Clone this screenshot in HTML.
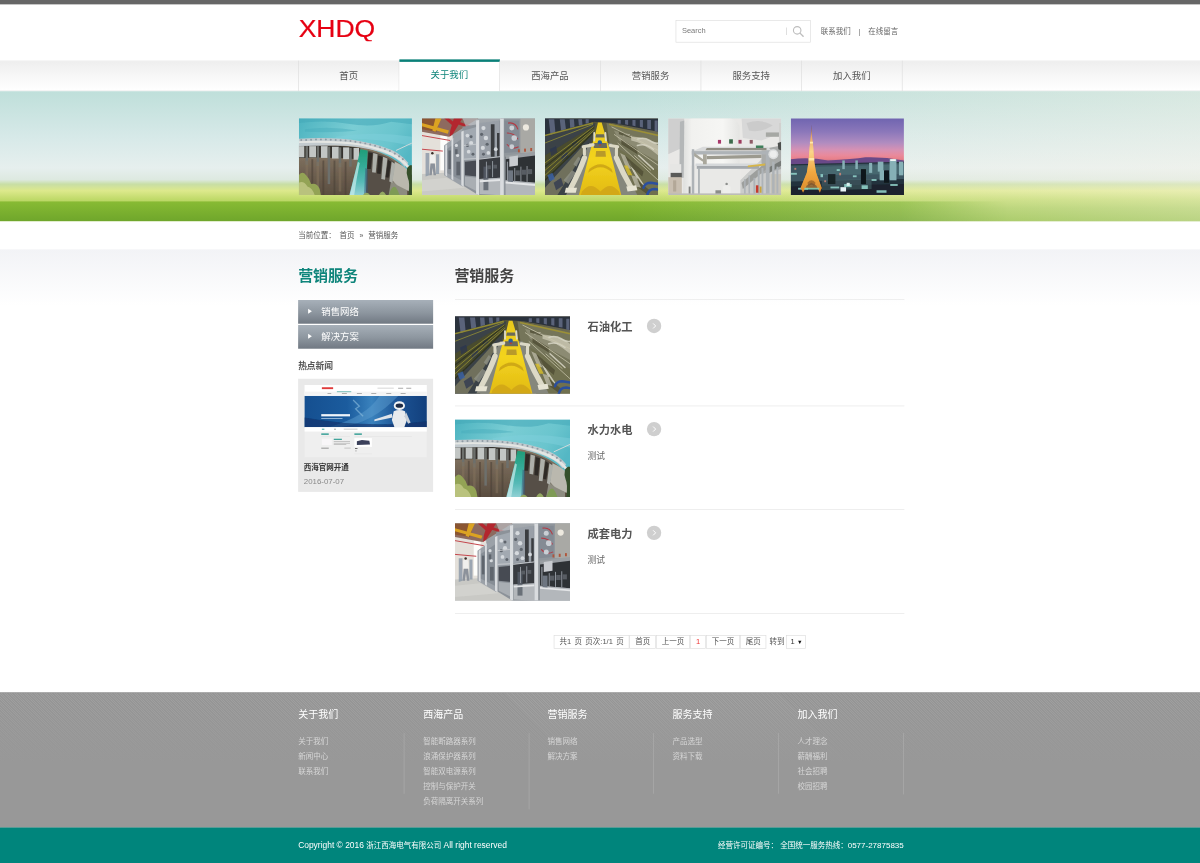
<!DOCTYPE html>
<html lang="zh-CN">
<head>
<meta charset="utf-8">
<title>营销服务 - 浙江西海电气有限公司</title>
<style>
*{margin:0;padding:0;box-sizing:border-box;}
html,body{width:1200px;height:863px;overflow:hidden;background:#fff;}
body{font-family:"Liberation Sans","Noto Sans CJK SC",sans-serif;font-size:12px;color:#666;}
ul{list-style:none;}
a{color:inherit;text-decoration:none;}
#page{position:absolute;left:0;top:0;width:1920px;height:1381px;transform:scale(.625);transform-origin:0 0;background:#fff;overflow:hidden;}
.wrap{position:absolute;left:477px;width:970px;}
/* top */
#topbar{position:absolute;left:0;top:0;width:1920px;height:7px;background:#666;}
#logo{position:absolute;left:0;top:26px;width:130px;height:40px;}
#search{position:absolute;left:604px;top:32px;width:216px;height:36px;border:1px solid #dcdcdc;background:#fff;}
#search .ph{position:absolute;left:9px;top:-1px;line-height:34px;font-size:12px;color:#7a7a7a;}
#search .sep{position:absolute;left:176px;top:11px;width:1px;height:12px;background:#ccc;}
#search svg{position:absolute;left:185px;top:7px;width:20px;height:20px;}
#toplinks{position:absolute;left:836px;top:40px;line-height:20px;font-size:12px;color:#666;white-space:nowrap;}
#toplinks i{font-style:normal;display:inline-block;width:28px;text-align:center;color:#777;}
/* nav */
#navbg{position:absolute;left:0;top:97px;width:1920px;height:49px;background:linear-gradient(#eeeeee,#f7f7f7 50%,#ffffff);border-top:1px solid #e6e6e6;border-bottom:1px solid #e2e2e2;}
#nav{top:97px;height:49px;display:flex;border-left:1px solid #dcdcdc;}
#nav li{width:161px;height:49px;line-height:48px;text-align:center;font-size:15px;color:#555;border-right:1px solid #dcdcdc;}
#nav li.on{background:#fff;border-top:4px solid #0a8078;line-height:42px;color:#0f857b;height:51px;margin-top:-2px;position:relative;}
/* banner */
#banner{position:absolute;left:0;top:146px;width:1920px;height:208px;background:linear-gradient(#bfdfda 0%,#d6e9e8 34.5%,#e6efee 59%,#dde9e0 68%,#c8dea5 71.5%,#dde98c 76.5%,#c0da6a 83%,#a6cb56 90%,#8fbd3f 100%);}
#band{position:absolute;left:0;top:321.5px;width:1620px;height:32.5px;background:linear-gradient(#88bb34,#6fa62b);-webkit-mask-image:linear-gradient(to right,#000 0,#000 1440px,rgba(0,0,0,0) 1610px);mask-image:linear-gradient(to right,#000 0,#000 1440px,rgba(0,0,0,0) 1610px);}
#bover{position:absolute;left:0;top:146px;width:1920px;height:208px;background:linear-gradient(to right,rgba(250,245,234,0) 0,rgba(250,245,234,0) 1000px,rgba(250,245,234,.2) 1450px,rgba(250,245,234,.4) 1920px);}
#bimgs{top:188.6px;height:123.4px;}
#bimgs svg{position:absolute;top:0;width:181.3px;height:123.4px;display:block;}
/* crumb */
#crumb{top:354px;height:45px;line-height:44px;font-size:12px;color:#555;white-space:nowrap;}
#crumb span{margin:0 6px 0 6px;}
#crumb b{font-weight:normal;margin:0 8px 0 2px;font-size:11px;}
#cbg{position:absolute;left:0;top:399px;width:1920px;height:90px;background:linear-gradient(#f2f3f6,#ffffff);}
/* side */
#side{position:absolute;left:477px;top:399px;width:216px;}
.h2{position:absolute;font-size:24px;font-weight:bold;line-height:40px;white-space:nowrap;letter-spacing:0;}
#side .h2{left:0;top:22px;color:#0f857b;}
#menu{position:absolute;left:0;top:81px;width:216px;}
#menu li{position:relative;height:38px;margin-bottom:2px;line-height:38px;padding-left:37px;font-size:15px;color:#fff;background:linear-gradient(#a7b0b9,#8d969f 55%,#727a84);border-bottom:1px solid #666e78;}
#menu li:before{content:"";position:absolute;left:16px;top:14px;border-left:6px solid #fff;border-top:4px solid transparent;border-bottom:4px solid transparent;}
#hot{position:absolute;left:0;top:174px;font-size:14px;font-weight:bold;color:#555;line-height:24px;white-space:nowrap;}
#news{position:absolute;left:0;top:207px;width:216px;height:181px;background:#e9e9e9;}
#news svg{position:absolute;left:10px;top:10px;width:196px;height:116px;display:block;}
#news .t{position:absolute;left:9px;top:131px;font-size:12px;font-weight:bold;color:#333;line-height:22px;white-space:nowrap;}
#news .d{position:absolute;left:9px;top:153px;font-size:12.6px;color:#888;line-height:22px;}
/* main */
#main{position:absolute;left:728px;top:399px;width:719px;}
#main .h2{left:-1px;top:22px;color:#444;}
#mline{position:absolute;left:0;top:80px;width:719px;height:1px;background:#e6e6e6;}
#list{position:absolute;left:0;top:86px;width:719px;}
#list li{position:relative;height:166px;border-bottom:1px solid #e4e4e4;}
#list li svg.ph{position:absolute;left:0;top:21px;width:184px;height:124px;display:block;}
#list h3{position:absolute;left:212px;top:21px;font-size:18px;font-weight:bold;color:#555;line-height:34px;white-space:nowrap;}
#list .go{position:absolute;left:307px;top:25px;width:23px;height:23px;border-radius:50%;background:#cfcfcf;}
#list .go svg{position:absolute;left:0;top:0;width:23px;height:23px;}
#list p{position:absolute;left:212px;top:69px;font-size:14px;color:#666;line-height:22px;}
#pager{position:absolute;left:0;top:616.5px;width:719px;text-align:center;font-size:12px;color:#555;white-space:nowrap;height:22px;}
#pager span{display:inline-block;vertical-align:top;height:22.5px;line-height:20.5px;border:1px solid #dcdcdc;padding:0 8px;margin-left:.5px;}
#pager span:first-child{word-spacing:2px;}
#pager span.r{color:#e33;}
#pager em{font-style:normal;display:inline-block;vertical-align:top;line-height:22.5px;margin:0 2px 0 5px;}
#pager span.sel{padding:0 4px 0 6px;color:#333;}
#pager span.sel small{font-size:9px;margin-left:4px;color:#111;}
/* footer */
#foot{position:absolute;left:0;top:1108px;width:1920px;height:216px;background:linear-gradient(rgba(152,152,152,0) 0,rgba(152,152,152,.35) 40px,#989898 112px),repeating-linear-gradient(45deg,rgba(255,255,255,.075) 0,rgba(255,255,255,.075) 1.3px,rgba(0,0,0,.02) 1.3px,rgba(0,0,0,.02) 2.83px),#989898;border-top:1px solid #8e8e8e;}
#fcols{top:1108px;height:216px;}
#fcols .c{position:absolute;top:0;width:170px;}
#fcols h4{position:absolute;left:0;top:23px;font-size:16px;font-weight:normal;color:#fff;line-height:24px;white-space:nowrap;}
#fcols ul{position:absolute;left:0;top:65px;width:170px;min-height:97px;padding-top:2px;border-right:1px solid #adadad;}
#fcols li{line-height:24px;font-size:12px;color:#d6d6d6;white-space:nowrap;}
#copy{position:absolute;left:0;top:1324px;width:1920px;height:57px;background:#00857c;}
#copyt{top:1324px;height:57px;line-height:58px;color:#fff;font-size:13.5px;white-space:nowrap;}
#copyt b{font-weight:normal;font-size:12px;}
#copyt i{font-style:normal;font-size:12.8px;}
#copyt .r{position:absolute;right:1px;top:0;}
</style>
</head>
<body>
<div id="page">
<svg width="0" height="0" style="position:absolute"><defs><filter id="b1" x="-5%" y="-5%" width="110%" height="110%"><feGaussianBlur stdDeviation="1.1"/></filter><filter id="b05" x="-5%" y="-5%" width="110%" height="110%"><feGaussianBlur stdDeviation="0.55"/></filter></defs><symbol id="dam" viewBox="0 0 184 124" preserveAspectRatio="none">
  <linearGradient id="damw" x1="0" y1="0" x2="1" y2="0.4"><stop offset="0" stop-color="#4cb3c0"/><stop offset=".45" stop-color="#7acdd4"/><stop offset=".8" stop-color="#6ac5ce"/><stop offset="1" stop-color="#54b7c4"/></linearGradient>
  <linearGradient id="damwall" x1="0" y1="0" x2="0" y2="1"><stop offset="0" stop-color="#8c7d69"/><stop offset=".5" stop-color="#716353"/><stop offset="1" stop-color="#5a4d40"/></linearGradient>
  <linearGradient id="damfall" x1="0" y1="0" x2="0" y2="1"><stop offset="0" stop-color="#1f9c78"/><stop offset=".35" stop-color="#33aa96"/><stop offset=".7" stop-color="#55b9b6"/><stop offset="1" stop-color="#8fd0d4"/></linearGradient>
  <rect width="184" height="124" fill="url(#damw)"/>
  <g filter="url(#b1)">
  <path d="M0 8 Q40 2 80 9 T150 6 L184 10 L184 0 L0 0Z" fill="#41a8b8" opacity=".55"/>
  <path d="M10 18 Q50 12 95 20 Q60 24 10 22Z" fill="#47abba" opacity=".45"/>
  <path d="M60 30 Q120 20 184 30 L184 45 Q120 30 60 34Z" fill="#7fd0dc" opacity=".5"/>
  <!-- wall -->
  <path d="M0 42 Q70 40 105 47 Q150 58 172 80 L184 92 L184 124 L0 124Z" fill="url(#damwall)"/>
  <!-- right dark section -->
  <path d="M112 52 Q140 58 158 72 L150 124 L106 124Z" fill="#565047"/>
  <!-- right concrete -->
  <path d="M156 70 Q170 76 178 84 L181 118 L162 112 L152 100Z" fill="#bab8ae"/>
  <path d="M150 100 L160 108 L176 116 L176 124 L146 124Z" fill="#8d8c80"/>
  </g>
  <!-- pillars left -->
  <g filter="url(#b05)">
  <path d="M0 44 Q60 42 100 48 L98 66 Q50 62 0 64Z" fill="#34322d"/>
  <g fill="#c2c6c4">
   <rect x="0" y="45" width="9" height="18"/><rect x="17" y="45" width="11" height="18"/><rect x="36" y="45" width="11" height="19"/><rect x="54" y="46" width="11" height="19"/><rect x="72" y="47" width="10" height="19"/><rect x="89" y="48" width="9" height="19"/>
  </g>
  <g fill="#6d6f6c">
   <rect x="11" y="45" width="4" height="30"/><rect x="29" y="45" width="4" height="32"/><rect x="47" y="46" width="4" height="60"/><rect x="65" y="47" width="4" height="32"/><rect x="82" y="48" width="4" height="30"/>
  </g>
  <g stroke="#4a3f33" stroke-width="3" opacity=".55"><path d="M22 66V124M40 68V124M58 68V124M76 70V124"/></g>
  <g stroke="#85745d" stroke-width="4" opacity=".5"><path d="M31 70V120M67 72V118M13 68V100"/></g>
  <!-- pillars right -->
  <g fill="#aeb0aa">
   <path d="M121 56 l7 2 l-3 30 l-6 -1Z"/><path d="M137 62 l7 3 l-4 34 l-6 -1Z"/><path d="M151 70 l6 4 l-5 30 l-5 -2Z"/>
  </g>
  <g fill="#2f2c27"><path d="M113 55 l7 1 l-3 26 l-6 0Z"/><path d="M129 60 l7 2 l-3 28 l-6 -1Z"/><path d="M145 67 l5 3 l-4 26 l-5 -1Z"/></g>
  <!-- waterfall -->
  <path d="M100 50 L112 52 Q110 90 109 124 L82 124 Q92 88 100 50Z" fill="url(#damfall)"/>
  <path d="M96 70 Q88 100 83 124 L90 124 Q94 96 99 72Z" fill="#c9ecec" opacity=".7"/>
  <path d="M108 80 L112 82 L112 124 L106 124Z" fill="#3a5a78" opacity=".55"/>
  <!-- crest -->
  <path d="M0 33 Q60 30 100 37 Q140 44 160 56 Q172 64 178 72 L172 78 Q160 62 132 54 Q100 45 60 44 L0 45Z" fill="#c3cbcf"/>
  <path d="M0 40 Q60 38 100 44 Q140 52 164 68 Q176 78 180 86 L184 92 L184 84 Q176 70 160 60 Q140 49 100 41 Q60 35 0 37Z" fill="#e4e6e3"/>
  <g fill="#8f9ba3"><circle cx="4" cy="35" r="1.6"/><circle cx="12" cy="35" r="1.6"/><circle cx="20" cy="34.6" r="1.6"/><circle cx="28" cy="34.4" r="1.6"/><circle cx="36" cy="34.4" r="1.6"/><circle cx="44" cy="34.4" r="1.6"/><circle cx="52" cy="34.6" r="1.6"/><circle cx="60" cy="35" r="1.6"/><circle cx="68" cy="35.4" r="1.6"/><circle cx="76" cy="36" r="1.6"/><circle cx="84" cy="36.8" r="1.6"/><circle cx="92" cy="37.8" r="1.6"/><circle cx="100" cy="39" r="1.6"/><circle cx="108" cy="40.6" r="1.6"/><circle cx="116" cy="42.4" r="1.6"/><circle cx="124" cy="44.4" r="1.6"/><circle cx="132" cy="46.8" r="1.6"/><circle cx="140" cy="49.6" r="1.6"/><circle cx="148" cy="53" r="1.6"/><circle cx="156" cy="57" r="1.7"/><circle cx="163" cy="61.5" r="1.7"/><circle cx="169" cy="66" r="1.7"/></g>
  <path d="M158 52 L184 40" stroke="#cdd9da" stroke-width="1.6" fill="none"/>
  </g>
  <!-- trees -->
  <g filter="url(#b1)">
  <path d="M0 92 Q6 84 12 92 Q18 98 20 106 Q30 104 34 114 L36 124 L0 124Z" fill="#93a355"/>
  <path d="M0 104 Q8 100 14 110 Q22 112 26 124 L0 124Z" fill="#c3c987" opacity=".8"/>
  <path d="M176 80 Q181 74 184 76 L184 124 L178 124 Q181 104 177 96 Q174 88 176 80Z" fill="#34502c"/>
  <path d="M146 124 Q152 106 158 112 Q162 118 164 124Z" fill="#7e9a55"/>
  <path d="M104 124 Q110 116 116 124Z M130 124 Q136 112 142 124Z" fill="#93a862"/>
  </g>
</symbol>
<symbol id="gear" viewBox="0 0 184 124" preserveAspectRatio="none">
  <linearGradient id="gearbg" x1="0" y1="0" x2="0" y2="1"><stop offset="0" stop-color="#a4a9ae"/><stop offset=".5" stop-color="#8f959b"/><stop offset="1" stop-color="#a9adb0"/></linearGradient>
  <rect width="184" height="124" fill="url(#gearbg)"/>
  <g filter="url(#b1)">
  <!-- left wall -->
  <path d="M0 20 L50 28 L50 90 L0 92Z" fill="#e4e0da"/>
  <rect x="30" y="26" width="11" height="58" fill="#fdfdfb"/>
  <path d="M0 28 L46 36 M0 50 L34 53" stroke="#c4474d" stroke-width="1.6" fill="none"/>
  <!-- ceiling -->
  <path d="M0 0 L92 0 L70 14 L44 30 L0 22Z" fill="#8d6a5e"/>
  <path d="M0 0 L30 0 L24 22 L0 18Z" fill="#8a5530"/>
  <path d="M22 0 L32 0 L22 22 L17 20Z M0 8 L44 20 L42 25 L0 13Z" fill="#dba321"/>
  <path d="M52 0 L66 0 L50 26 L45 30 L46 20Z M60 6 L90 16 L88 20 L58 10Z M36 0 L44 0 L56 10 L52 14Z" fill="#b3272f"/>
  <path d="M66 0 L90 0 L90 14 L74 20Z" fill="#b9bcc0" opacity=".7"/>
  <!-- floor -->
  <path d="M0 90 L38 88 L62 104 L96 124 L0 124Z" fill="#c9c9c5"/>
  <path d="M0 100 L40 96 L70 112 L0 118Z" fill="#d6d6d2" opacity=".7"/>
  <!-- frames left-middle -->
  <path d="M36 44 L66 22 L66 110 L36 92Z" fill="#9ba1a8"/>
  <path d="M40 50 L64 34 L64 100 L40 88Z" fill="#7f868e" opacity=".7"/>
  <!-- middle block -->
  <path d="M66 14 L128 4 L128 124 L92 124 L66 108Z" fill="#8c9299"/>
  <path d="M68 20 L90 14 L90 66 L68 68Z" fill="#a8afb6" opacity=".8"/>
  <path d="M92 8 L126 4 L126 60 L92 64Z" fill="#9aa1a8" opacity=".9"/>
  <!-- right block -->
  <path d="M128 0 L184 0 L184 124 L128 124Z" fill="#90969c"/>
  <rect x="160" y="0" width="24" height="56" fill="#a9a9a5"/>
  <circle cx="169" cy="15" r="5" fill="#f4efe6" opacity=".9"/>
  <path d="M134 4 L158 4 L158 54 L134 56Z" fill="#848b94"/>
  <g fill="none" stroke="#b43a44" stroke-width="1.8"><path d="M140 8 Q152 6 156 18"/><path d="M138 24 Q150 24 156 34"/><path d="M138 42 Q146 52 157 46"/></g>
  <g fill="#c9ced4"><circle cx="146" cy="16" r="4"/><circle cx="150" cy="32" r="4.5"/><circle cx="146" cy="46" r="4"/></g>
  <!-- dark stuff -->
  <path d="M112 10 L118 10 L118 62 L112 62Z M122 24 L126 24 L126 62 L122 62Z" fill="#3a3d41"/>
  <path d="M70 70 L90 68 L90 94 L70 92Z" fill="#474b52"/>
  <path d="M92 66 L127 62 L127 96 L92 98Z" fill="#383b40"/>
  <path d="M136 62 L184 56 L184 104 L136 100Z" fill="#2e3136"/>
  <path d="M136 60 L184 54 L184 60 L136 66Z" fill="#9a9fa3"/>
  <path d="M142 62 L156 60 L156 76 L142 78Z" fill="#c9ccd0"/>
  <path d="M136 100 L184 104 L184 124 L136 124Z M94 98 L127 96 L127 124 L94 122Z" fill="#b3b7bb"/>
  <path d="M70 94 L90 96 L90 118 L70 108Z" fill="#a9aeb3"/>
  <path d="M100 78 L108 78 L108 116 L100 116Z" fill="#565d68" opacity=".8"/>
  </g>
  <!-- busy details -->
  <g filter="url(#b05)">
  <g fill="#d5d9dd"><circle cx="74" cy="28" r="3"/><circle cx="80" cy="40" r="3.4"/><circle cx="76" cy="54" r="3"/><circle cx="100" cy="16" r="3.4"/><circle cx="104" cy="32" r="3.6"/><circle cx="99" cy="48" r="3.4"/><circle cx="108" cy="56" r="3"/><circle cx="56" cy="44" r="2.6"/><circle cx="58" cy="60" r="2.6"/><circle cx="120" cy="50" r="3"/></g>
  <g fill="#5f656d"><circle cx="80" cy="30" r="2.4"/><circle cx="74" cy="44" r="2.6"/><circle cx="83" cy="58" r="2.4"/><circle cx="97" cy="26" r="2.6"/><circle cx="106" cy="42" r="2.6"/><circle cx="100" cy="58" r="2.4"/><rect x="54" y="50" width="4" height="8"/><rect x="43" y="52" width="4" height="30"/><rect x="56" y="70" width="6" height="22"/></g>
  <g fill="#8d939a"><rect x="138" y="70" width="2" height="30"/><rect x="150" y="80" width="1.6" height="22"/><rect x="160" y="78" width="1.6" height="24"/><rect x="170" y="77" width="1.6" height="26"/><rect x="104" y="70" width="1.6" height="26"/><rect x="114" y="69" width="1.6" height="26"/></g>
  <g fill="#585d64"><rect x="152" y="84" width="7" height="8"/><rect x="162" y="83" width="7" height="8"/><rect x="172" y="82" width="7" height="8"/><rect x="106" y="76" width="6" height="6"/><rect x="116" y="75" width="6" height="6"/></g>
  <g fill="#b0553a"><rect x="156" y="50" width="3" height="5"/><rect x="166" y="49" width="3" height="5"/><rect x="176" y="48" width="3" height="5"/></g>
  <path d="M140 84 L148 84 L148 104 L140 104Z" fill="#6e7681"/>
  <path d="M94 100 L127 98 L127 101 L94 103Z M136 102 L184 106 L184 109 L136 105Z" fill="#e3e5e7"/>
  </g>
  <g filter="url(#b05)">
  <!-- pillars -->
  <g fill="#d9dcdf"><path d="M64 22 L68 20 L68 110 L64 108Z"/><path d="M88 4 L93 3 L93 124 L88 122Z"/><path d="M127 0 L133 0 L133 124 L127 124Z"/><path d="M48 34 L51 32 L51 100 L48 98Z"/><path d="M38 44 L41 42 L41 94 L38 92Z"/></g>
  <path d="M68 44 L88 42 M68 66 L88 65 M93 66 L127 62" stroke="#c6cace" stroke-width="1.5"/>
  <!-- person -->
  <path d="M13 60 Q17 56 21 60 L22 73 L13 73Z" fill="#f0f0ee"/><circle cx="17" cy="56.5" r="2" fill="#3a2d28"/>
  <path d="M14 73 L21 73 L23 92 L19 92 L17.5 80 L16 92 L12 92Z" fill="#8c929b"/>
  <path d="M6 56 L12 56 L12 92 L6 94Z M23 58 L28 58 L28 90 L23 90Z" fill="#8a97a6" opacity=".8"/>
  </g>
</symbol>
<symbol id="mach" viewBox="0 0 184 124" preserveAspectRatio="none">
  <linearGradient id="machy" x1="0" y1="0" x2="0" y2="1"><stop offset="0" stop-color="#e8c81c"/><stop offset=".5" stop-color="#f3d41e"/><stop offset="1" stop-color="#e2ba14"/></linearGradient>
  <linearGradient id="machbg" x1="0" y1="0" x2="1" y2="0"><stop offset="0" stop-color="#343a40"/><stop offset=".3" stop-color="#45472f"/><stop offset=".55" stop-color="#5d5c40"/><stop offset="1" stop-color="#6c6a52"/></linearGradient>
  <rect width="184" height="124" fill="url(#machbg)"/>
  <g filter="url(#b1)">
  <!-- top dark band -->
  <path d="M0 0 L184 0 L184 22 L110 8 L80 6 L0 30Z" fill="#2b303c"/>
  <g fill="#66708a" opacity=".8"><path d="M6 2 l9 0 l2 22 l-8 3Z M24 2 l8 0 l2 16 l-8 2Z M40 2 l7 0 l1 12 l-7 2Z M54 2 l6 0 l1 9 l-6 1Z M66 2 l5 0 l0 6 l-5 1Z"/><path d="M178 4 l5 0 l0 18 l-5 -1Z M166 3 l6 0 l0 15 l-6 -1Z M154 3 l5 0 l0 12 l-5 -1Z M142 3 l5 0 l0 10 l-5 -1Z M130 3 l5 0 l0 8 l-5 -1Z M118 3 l5 0 l0 6 l-5 0Z"/></g>
  <!-- left floor -->
  <path d="M0 30 L82 8 L70 60 L40 124 L0 124Z" fill="#3b4246"/>
  <path d="M0 60 L80 12 L76 28 L0 100Z" fill="#4a4d2a" opacity=".9"/>
  <path d="M20 124 L66 50 L60 46 L0 112 L0 124Z" fill="#6f705c"/>
  <!-- right floor -->
  <path d="M100 8 L184 26 L184 124 L130 124 L106 50Z" fill="#75745a"/>
  <path d="M112 20 L184 40 L184 70 L120 36Z" fill="#96967e" opacity=".7"/>
  <path d="M120 50 L184 84 L184 124 L150 124Z" fill="#6f6d4d" opacity=".75"/>
  <path d="M140 30 Q165 30 184 44 L184 60 Q160 40 140 36Z" fill="#d2cfbb" opacity=".7"/>
  </g>
  <g filter="url(#b05)">
  <g fill="none" stroke="#d8d6c6" stroke-width="2.4" stroke-linecap="round" opacity=".85"><path d="M150 34 Q160 30 170 36 T184 40"/><path d="M150 44 Q164 40 176 50"/><path d="M128 28 Q134 24 140 30"/><path d="M152 60 L176 82"/><path d="M136 70 L150 96"/><path d="M144 84 L160 108"/></g>
  <g fill="#4f4d34" opacity=".8"><path d="M124 34 L150 50 L150 58 L124 42Z M130 60 L160 86 L158 94 L128 68Z M150 100 L170 116 L168 124 L146 108Z"/><path d="M120 22 L140 28 L140 32 L120 26Z"/></g>
  <g fill="#b9b7a4" opacity=".8"><path d="M122 56 l8 4 l10 22 l-8 -2Z M140 92 l8 2 l8 18 l-9 -2Z"/></g>
  <path d="M128 76 l6 0 l8 16 l-7 0Z" fill="#d9bf2a" opacity=".8"/>
  <g fill="#2a3350" opacity=".7"><path d="M8 50 l10 -5 l2 10 l-10 6Z M26 60 l10 -6 l2 8 l-10 7Z M44 40 l8 -4 l1 6 l-8 5Z M14 104 l12 -8 l4 12 l-12 8Z"/></g>
  <g fill="#8f9186" opacity=".8"><path d="M30 100 l14 -16 l6 4 l-12 18Z M46 74 l8 -12 l4 3 l-7 13Z"/></g>
  </g>
  <g filter="url(#b05)">
  <!-- rails left -->
  <g stroke="#a8a032" stroke-width="1.5" fill="none" opacity=".7"><path d="M0 40 L78 10"/><path d="M0 72 L79 14"/><path d="M0 84 L80 16"/><path d="M0 92 L80 19"/></g>
  <g stroke="#2a2f1e" stroke-width="2" fill="none" opacity=".8"><path d="M0 78 L80 15"/><path d="M0 100 L78 24"/></g>
  <path d="M0 28 L78 8" stroke="#8f8832" stroke-width="2.5"/>
  <!-- right rails -->
  <g stroke="#c9c6ad" stroke-width="1.5" fill="none" opacity=".8"><path d="M108 14 L184 52"/><path d="M112 26 L184 76"/><path d="M118 40 L184 100"/><path d="M145 60 L172 84"/></g>
  <path d="M104 10 L184 28" stroke="#9c9036" stroke-width="2.5"/>
  <!-- gray bed -->
  <path d="M72 40 L108 40 L150 124 L34 124Z" fill="#85877c"/>
  <!-- yellow -->
  <path d="M86 7 L92 7 L97 24 L106 54 L124 124 L55 124 L73 54 L82 24Z" fill="url(#machy)"/>
  <path d="M83 26 L96 26 L97 31 L82 31Z M80 40 L100 40 L101 48 L79 48Z" fill="#6b6a5a"/>
  <path d="M83 53 L98 53 L99 62 L82 62Z" fill="#b89a2a"/>
  <path d="M70 88 Q90 70 110 88 L108 82 Q90 66 72 82Z" fill="#c79f10" opacity=".8"/>
  <path d="M60 118 Q74 100 90 118 Q106 100 120 118 L122 124 L58 124Z" fill="#d0a416" opacity=".85"/>
  <circle cx="89" cy="39" r="3.6" fill="#2a5c9c"/><circle cx="89.5" cy="43" r="1.5" fill="#c0392b"/>
  <!-- white pipes -->
  <g fill="none" stroke="#dcd9c6" stroke-linecap="round">
   <path d="M62 46 L78 43" stroke-width="5"/><path d="M64 46 L64 58" stroke-width="5"/>
   <path d="M64 64 Q56 86 42 112" stroke-width="8.5"/>
   <path d="M106 44 L118 46" stroke-width="5"/><path d="M116 46 L116 60" stroke-width="5"/>
   <path d="M116 64 Q126 88 140 112" stroke-width="8.5"/>
   <path d="M80 24 L80 36 M98 24 L99 36" stroke-width="3"/>
  </g>
  <path d="M34 112 L52 112 L50 120 L32 120Z M132 110 L148 108 L150 116 L134 118Z" fill="#e6e3d2"/>
  <g fill="none" stroke="#2a4f9e" stroke-width="4" stroke-linecap="round"><path d="M160 112 Q162 104 172 104 L184 106"/><path d="M166 124 Q168 114 178 114 L184 115"/></g>
  <path d="M4 92 l8 -4 l4 10 l-8 4Z" fill="#3b63a8" opacity=".8"/>
  </g>
</symbol>
<symbol id="tank" viewBox="0 0 182 124" preserveAspectRatio="none">
  <linearGradient id="tankg" x1="0" y1="0" x2="1" y2="0"><stop offset="0" stop-color="#dedfdd"/><stop offset=".15" stop-color="#f1f1ef"/><stop offset=".7" stop-color="#f6f6f4"/><stop offset="1" stop-color="#e4e4e2"/></linearGradient>
  <rect width="182" height="124" fill="#e9e8e6"/>
  <g filter="url(#b1)">
  <path d="M0 0 L26 0 L22 48 L0 58Z" fill="#cfcfcf"/>
  <path d="M118 0 L182 0 L182 24 L150 36 L120 32Z" fill="#d8d8d8"/>
  <path d="M126 8 Q150 0 168 12 Q150 24 130 20Z" fill="#cbcbcb"/>
  <!-- tank -->
  <path d="M26 12 Q28 0 40 0 L100 0 Q114 4 115 16 L115 124 L24 124Z" fill="url(#tankg)"/>
  <path d="M36 76 L116 76 L116 124 L36 124Z" fill="#e9e9e7"/>
  <!-- ladder -->
  <path d="M19 6 L26 4 L25 96 L18 96Z" fill="#b4b7b8"/>
  <!-- left buildings -->
  <rect x="3" y="74" width="18" height="16" fill="#e6e6e4"/>
  <rect x="4" y="88" width="18" height="8" fill="#5a5a58"/>
  <rect x="0" y="95" width="22" height="27" fill="#c9bfb1"/>
  <path d="M8 100 h5 v18 h-5Z" fill="#b3a898"/>
  <!-- right structure -->
  <path d="M116 100 L150 66 L182 50 L182 124 L116 124Z" fill="#cbcccb"/>
  <path d="M150 50 L182 44 L182 82 L150 90Z" fill="#a9abaa"/>
  <path d="M118 104 L156 72 L160 80 L120 114Z" fill="#9d9f9d"/>
  <path d="M160 80 L182 68 L182 76 L160 90Z" fill="#777a78"/>
  <path d="M165 90 L182 90 L182 122 L165 122Z" fill="#c4c1b8"/>
  </g>
  <g filter="url(#b05)">
  <rect x="157" y="23" width="25" height="7" fill="#a6a8a4"/>
  <rect x="178" y="8" width="4" height="40" fill="#d1d1cf"/>
  <!-- rack -->
  <path d="M56 46 L160 46 L166 52 L40 53Z" fill="#d9dadb"/>
  <path d="M62 48 L158 48 L158 51.5 L60 51.5Z" fill="#8f8d82"/>
  <rect x="38" y="53" width="124" height="5.5" fill="#aeb3b7"/>
  <path d="M62 61 L150 59 L150 64 L62 66Z" fill="#9c9a8f"/>
  <rect x="44" y="73" width="106" height="4" fill="#d5d8da"/>
  <rect x="46" y="77" width="100" height="4.5" fill="#a4a9ad"/>
  <path d="M128 76 L156 73 L156 76 L128 79Z" fill="#d6b548"/>
  <path d="M40 54 L56 66 L56 70 L40 60Z M56 58 L62 58 L62 74 L56 74Z" fill="#a9a79c"/>
  <g fill="#aeb3b7"><rect x="122" y="98" width="2.5" height="26"/><rect x="129" y="92" width="2.5" height="32"/><rect x="144" y="84" width="3" height="40"/><rect x="167" y="70" width="4" height="54"/><rect x="38" y="50" width="4" height="74"/><rect x="48" y="80" width="3" height="44"/><rect x="157" y="52" width="6" height="72"/><rect x="150" y="80" width="3" height="44"/><rect x="137" y="96" width="3" height="28"/><rect x="174" y="78" width="3" height="46"/></g>
  <circle cx="169" cy="58" r="8" fill="#dcdedf"/><circle cx="169" cy="58" r="5.5" fill="#eceded"/>
  <path d="M176 40 L182 38 L182 52 L177 50Z" fill="#4d504e"/>
  <g><rect x="80" y="35" width="5" height="6" fill="#a8386a"/><rect x="98" y="34" width="6" height="7" fill="#3c6b4c"/><rect x="113" y="35" width="5" height="6" fill="#9c3a5c"/><rect x="131" y="35" width="5" height="6" fill="#8e5a66"/><rect x="141" y="44" width="12" height="4" fill="#3f7f5a"/></g>
  <path d="M141 108 h4 v12 h-4Z" fill="#c53a2e"/><path d="M147 110 h3 v10 h-3Z" fill="#c9a43a"/>
  <circle cx="94" cy="106" r="2" fill="#8d8f8d"/><path d="M88 110 Q94 106 100 110 L100 122 L88 122Z" fill="#eeeeec"/>
  <rect x="76" y="116" width="9" height="8" fill="#8b8d8a"/><rect x="33" y="110" width="3" height="14" fill="#7f817f"/>
  <rect x="0" y="121" width="182" height="3" fill="#bcbcb7"/>
  </g>
</symbol>
<symbol id="tokyo" viewBox="0 0 182 124" preserveAspectRatio="none">
  <linearGradient id="tksky" x1="0" y1="0" x2="0" y2="1"><stop offset="0" stop-color="#6f64b0"/><stop offset=".18" stop-color="#8c78ba"/><stop offset=".32" stop-color="#b08cc0"/><stop offset=".41" stop-color="#d691b4"/><stop offset=".48" stop-color="#e98a9c"/><stop offset=".53" stop-color="#e8808a"/><stop offset=".57" stop-color="#b0648c"/><stop offset=".61" stop-color="#5a4278"/><stop offset=".67" stop-color="#2f3b4c"/><stop offset="1" stop-color="#182028"/></linearGradient>
  <linearGradient id="tktw" x1="0" y1="0" x2="0" y2="1"><stop offset="0" stop-color="#5a3a50"/><stop offset=".18" stop-color="#e8a868"/><stop offset=".4" stop-color="#fbd58a"/><stop offset=".7" stop-color="#f2a840"/><stop offset="1" stop-color="#d98a2a"/></linearGradient>
  <rect width="182" height="124" fill="url(#tksky)"/>
  <g filter="url(#b1)">
  <path d="M0 66 Q30 62 60 68 Q100 66 120 63 Q150 62 182 68 L182 76 L0 76Z" fill="#6a4a88"/>
  <path d="M0 74 L182 70 L182 124 L0 124Z" fill="#24313c"/>
  <path d="M0 76 L182 72 L182 98 L0 102Z" fill="#44626c" opacity=".8"/>
  <path d="M40 78 L182 74 L182 90 L40 92Z" fill="#4d727a" opacity=".6"/>
  <path d="M0 110 L182 106 L182 124 L0 124Z" fill="#141a20" opacity=".55"/><path d="M50 100 L130 98 L130 114 L50 116Z" fill="#4a6a70" opacity=".5"/>
  </g>
  <g filter="url(#b05)">
  <!-- buildings -->
  <g fill="#86b0b6"><rect x="159" y="66" width="11" height="34"/><rect x="174" y="70" width="7" height="22"/><rect x="140" y="70" width="9" height="16"/><rect x="126" y="72" width="5" height="16"/><rect x="83" y="68" width="4" height="14"/><rect x="104" y="68" width="4" height="14"/><rect x="143" y="84" width="8" height="16"/></g>
  <rect x="160" y="66" width="9" height="3" fill="#f3f7f6"/>
  <rect x="113" y="82" width="8" height="24" fill="#0f151a"/><rect x="150" y="84" width="8" height="20" fill="#10161c"/><rect x="60" y="90" width="12" height="16" fill="#11171d" opacity=".8"/>
  <g fill="#8fd0c8" opacity=".9"><rect x="0" y="88" width="10" height="3"/><rect x="48" y="90" width="4" height="5"/><rect x="64" y="110" width="14" height="3"/><rect x="86" y="106" width="12" height="5"/><rect x="114" y="108" width="10" height="6"/><rect x="138" y="116" width="16" height="4"/><rect x="12" y="112" width="16" height="3"/><rect x="100" y="92" width="6" height="3"/><rect x="130" y="98" width="8" height="3"/><rect x="160" y="106" width="12" height="3"/><rect x="74" y="82" width="5" height="3"/></g>
  <rect x="80" y="111" width="9" height="7" fill="#e9f4f8"/><rect x="90" y="104" width="5" height="5" fill="#d8f0ee"/>
  <g fill="#d98a7a" opacity=".8"><rect x="6" y="80" width="3" height="3"/><rect x="54" y="100" width="3" height="3"/><rect x="78" y="88" width="3" height="4"/></g>
  <!-- tower -->
  <path d="M33.3 22 L38 70 L41 88 L50 114 L16 114 L26 88 L28.6 70Z" fill="#f0a040" opacity=".55" filter="url(#b1)"/>
  <path d="M33.3 10 L34.4 30 L36.6 48 L38 70 L41 88 L50 112 L47 120 L41 108 L33.3 104 L26 108 L20 120 L16 112 L26 88 L28.8 70 L30.2 48 L32.4 30Z" fill="url(#tktw)"/>
  <path d="M29 64 h9 v4 h-9Z M31 38 h5 v3 h-5Z" fill="#ffe9a8"/>
  <path d="M27 104 Q33.3 96 40 104 L38 110 Q33.3 104 29 110Z" fill="#7a4a20" opacity=".55"/>
  <path d="M22 112 h24 v3 h-24Z" fill="#7fd8c0" opacity=".8"/>
  </g>
</symbol>
</svg>
<div id="topbar"></div>
<div class="wrap" style="top:0;height:97px">
  <svg id="logo" viewBox="0 0 130 40"><text x="0.8" y="33.7" font-family="Liberation Sans, sans-serif" font-size="37.6" fill="#e60012" stroke="#e60012" stroke-width="0.35" textLength="122.6" lengthAdjust="spacingAndGlyphs">XHDQ</text></svg>
  <div id="search"><span class="ph">Search</span><span class="sep"></span>
    <svg viewBox="0 0 20 20"><circle cx="8.5" cy="8.5" r="6" fill="none" stroke="#bdbdbd" stroke-width="1.8"/><path d="M13 13 L18 18" stroke="#bdbdbd" stroke-width="2.2" stroke-linecap="round"/></svg>
  </div>
  <div id="toplinks">联系我们<i>|</i>在线留言</div>
</div>
<div id="navbg"></div>
<ul id="nav" class="wrap">
  <li>首页</li><li class="on">关于我们</li><li>西海产品</li><li>营销服务</li><li>服务支持</li><li>加入我们</li>
</ul>
<div id="banner"></div><div id="band"></div><div id="bover"></div>
<div id="bimgs" class="wrap">
<svg style="left:1.2px" viewBox="0 0 184 124" preserveAspectRatio="none"><use href="#dam"/></svg><svg style="left:198.0px" viewBox="0 0 184 124" preserveAspectRatio="none"><use href="#gear"/></svg><svg style="left:394.8px" viewBox="0 0 184 124" preserveAspectRatio="none"><use href="#mach"/></svg><svg style="left:591.6px" viewBox="0 0 182 124" preserveAspectRatio="none"><use href="#tank"/></svg><svg style="left:788.4px" viewBox="0 0 182 124" preserveAspectRatio="none"><use href="#tokyo"/></svg>
</div>
<div id="crumb" class="wrap">当前位置：<span>首页</span><b>»</b>营销服务</div>
<div id="cbg"></div>
<div id="side">
  <div class="h2">营销服务</div>
  <ul id="menu"><li>销售网络</li><li>解决方案</li></ul>
  <div id="hot">热点新闻</div>
  <div id="news">
<svg viewBox="0 0 196 116" preserveAspectRatio="none">
  <linearGradient id="nwb" x1="0" y1="0" x2="1" y2="0"><stop offset="0" stop-color="#154f90"/><stop offset=".35" stop-color="#1b5c9e"/><stop offset=".55" stop-color="#3a82bd"/><stop offset=".75" stop-color="#1d5596"/><stop offset="1" stop-color="#123f7c"/></linearGradient>
  <rect width="196" height="116" fill="#efefef"/>
  <rect width="196" height="17.5" fill="#fff"/>
  <rect x="28" y="3.6" width="18" height="3" fill="#e03a3a" filter="url(#b05)"/>
  <rect x="117" y="4" width="26" height="2.4" fill="#e4e4e4"/><rect x="150" y="4.4" width="8" height="1.6" fill="#aaa"/><rect x="163" y="4.4" width="8" height="1.6" fill="#aaa"/>
  <rect x="0" y="10.6" width="196" height="5" fill="#f4f4f4"/>
  <rect x="52" y="10.4" width="23" height="1" fill="#2a9a90"/>
  <g fill="#999"><rect x="37" y="13" width="6" height="1.2"/><rect x="60" y="13" width="8" height="1.2"/><rect x="84" y="13" width="8" height="1.2"/><rect x="107" y="13" width="8" height="1.2"/><rect x="131" y="13" width="8" height="1.2"/><rect x="154" y="13" width="8" height="1.2"/></g>
  <rect x="0" y="17.5" width="196" height="50" fill="url(#nwb)"/>
  <g filter="url(#b1)">
  <path d="M60 67 Q110 60 150 17.5 L120 17.5 Q100 50 40 67Z" fill="#5fa0d0" opacity=".45"/>
  <path d="M0 67 L196 67 L196 58 Q100 70 0 52Z" fill="#0d2f66" opacity=".6"/>
  <path d="M78 24 l10 10 l-6 4 l12 12" stroke="#8fc0e0" stroke-width="2" fill="none" opacity=".6"/>
  <ellipse cx="152" cy="33" rx="9" ry="7" fill="#f2f4f6"/><ellipse cx="152" cy="33" rx="6" ry="3.4" fill="#1c2c44"/>
  <path d="M143 42 Q152 38 161 42 L164 56 L160 67 L144 67 L140 56Z" fill="#e8ebee"/>
  <path d="M140 46 L112 55 L112 58 L141 52Z" fill="#dfe4ea"/>
  <path d="M163 44 L170 60 L166 62 L160 50Z" fill="#c9d0d8"/>
  </g>
  <rect x="27" y="46.6" width="46" height="3.6" fill="#eef4fa" filter="url(#b05)"/><rect x="27" y="53" width="34" height="1.4" fill="#9fc0e0"/>
  <rect x="0" y="67.5" width="196" height="7" fill="#fff"/>
  <rect x="28" y="70" width="4" height="1.4" fill="#2a9a90"/><rect x="48" y="70" width="2" height="1.4" fill="#666"/><rect x="63" y="70" width="22" height="1.2" fill="#bbb"/>
  <rect x="27" y="77.5" width="12" height="2.2" fill="#2a9a90"/><rect x="80" y="77.5" width="12" height="2.2" fill="#2a9a90"/>
  <rect x="27" y="82" width="46" height=".6" fill="#ddd"/><rect x="80" y="82" width="92" height=".6" fill="#ddd"/>
  <rect x="28" y="86" width="16" height="10" fill="#f8f6f8"/><rect x="47" y="86" width="13" height="1.8" fill="#2a9a90"/><rect x="47" y="90" width="26" height="1" fill="#aaa"/><rect x="47" y="92.6" width="26" height="1" fill="#aaa"/><rect x="47" y="95" width="20" height="1" fill="#aaa"/>
  <rect x="27" y="100.4" width="12" height="1.2" fill="#777"/><rect x="64" y="100.4" width="10" height="1" fill="#aaa"/>
  <rect x="80" y="85" width="28" height="14" fill="#fff"/><path d="M84 90 L92 88 L104 89 L105 95 L84 96Z" fill="#3a3f5a" filter="url(#b05)"/>
  <rect x="81" y="101" width="4" height="1.4" fill="#555"/><rect x="81" y="105" width="3" height="1" fill="#999"/><rect x="80" y="110" width="28" height=".6" fill="#ddd"/>
</svg>

    <div class="t">西海官网开通</div>
    <div class="d">2016-07-07</div>
  </div>
</div>
<div id="main">
  <div class="h2">营销服务</div>
  <div id="mline"></div>
  <ul id="list">
    <li style="height:165px"><svg class="ph" viewBox="0 0 184 124" preserveAspectRatio="none"><use href="#mach"/></svg><h3>石油化工</h3><span class="go"><svg viewBox="0 0 23 23"><path d="M10 7.5 L14 11.5 L10 15.5" fill="none" stroke="#fff" stroke-width="1.6"/></svg></span></li>
    <li><svg class="ph" viewBox="0 0 184 124" preserveAspectRatio="none"><use href="#dam"/></svg><h3>水力水电</h3><span class="go"><svg viewBox="0 0 23 23"><path d="M10 7.5 L14 11.5 L10 15.5" fill="none" stroke="#fff" stroke-width="1.6"/></svg></span><p>测试</p></li>
    <li><svg class="ph" viewBox="0 0 184 124" preserveAspectRatio="none"><use href="#gear"/></svg><h3>成套电力</h3><span class="go"><svg viewBox="0 0 23 23"><path d="M10 7.5 L14 11.5 L10 15.5" fill="none" stroke="#fff" stroke-width="1.6"/></svg></span><p>测试</p></li>
  </ul>
  <div id="pager"><span>共1 页 页次:1/1 页</span><span>首页</span><span>上一页</span><span class="r">1</span><span>下一页</span><span>尾页</span><em>转到</em><span class="sel">1<small>▼</small></span></div>
</div>
<div id="foot"></div>
<div id="fcols" class="wrap">
  <div class="c" style="left:0"><h4>关于我们</h4><ul><li>关于我们</li><li>新闻中心</li><li>联系我们</li></ul></div>
  <div class="c" style="left:200px"><h4>西海产品</h4><ul><li>智能断路器系列</li><li>浪涌保护器系列</li><li>智能双电源系列</li><li>控制与保护开关</li><li>负荷隔离开关系列</li></ul></div>
  <div class="c" style="left:399px"><h4>营销服务</h4><ul><li>销售网络</li><li>解决方案</li></ul></div>
  <div class="c" style="left:599px"><h4>服务支持</h4><ul><li>产品选型</li><li>资料下载</li></ul></div>
  <div class="c" style="left:799px"><h4>加入我们</h4><ul><li>人才理念</li><li>薪酬福利</li><li>社会招聘</li><li>校园招聘</li></ul></div>
</div>
<div id="copy"></div>
<div id="copyt" class="wrap"><span>Copyright © 2016 <b>浙江西海电气有限公司</b> All right reserved</span><span class="r"><b>经营许可证编号： 全国统一服务热线：</b><i>0577-27875835</i></span></div>
</div>
</body>
</html>
